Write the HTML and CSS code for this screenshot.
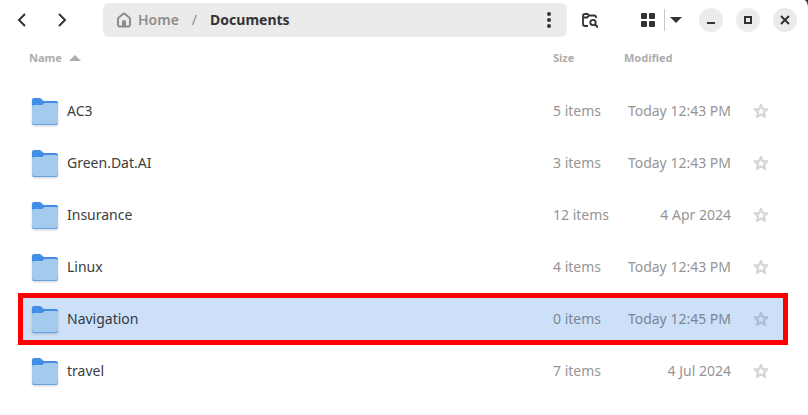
FILE: index.html
```html
<!DOCTYPE html>
<html lang="en">
<head>
<meta charset="utf-8">
<title>Documents</title>
<link rel="stylesheet" href="styles.css">
</head>
<body>
<svg class="defs" aria-hidden="true">
  <symbol id="folder" viewBox="0 0 30 34">
    <path d="M2 29V6Q2 4 4 4H9.500Q11 4 12 5.500T14.500 7H26Q28 7 28 9V29Z" fill="#438de6"/>
    <path d="M4 11H11.500Q12.800 11 13.500 10T15.500 9H26Q28 9 28 11V29Q28 31 26 31H4Q2 31 2 29V13Q2 11 4 11Z" fill="#62a0ea"/>
    <path d="M4 11H11.500Q12.800 11 13.500 10T15.500 9H26Q28 9 28 11V28Q28 30 26 30H4Q2 30 2 28V13Q2 11 4 11Z" fill="#a4caee"/>
  </symbol>
  <symbol id="star" viewBox="0 0 16 16">
    <path d="M8 1.800L9.700 6.100L14.300 6.400L10.800 9.300L12 13.900L8 11.400L4 13.900L5.200 9.300L1.700 6.400L6.300 6.100Z" fill="none" stroke="currentColor" stroke-width="2.200" stroke-linejoin="round"/>
  </symbol>
</svg>
<main class="window">
  <header class="bar">
    <nav class="history">
      <button class="tool" aria-label="Back"><svg width="16" height="16" viewBox="0 0 16 16"><path d="M11 2L5 8L11 14" class="line"/></svg></button>
      <button class="tool" aria-label="Forward"><svg width="16" height="16" viewBox="0 0 16 16"><path d="M5 2L11 8L5 14" class="line"/></svg></button>
    </nav>
    <div class="path">
      <a class="crumb" href="#"><svg width="16" height="16" viewBox="0 0 16 16"><path d="M2 7.200Q2 6.200 2.800 5.500L7 2Q8 1.200 9 2L13.200 5.500Q14 6.200 14 7.200V12.500Q14 14.500 12 14.500H4Q2 14.500 2 12.500Z" class="line"/><path d="M6 15V10Q6 8 8 8T10 10V15Z" fill="currentColor"/></svg>Home</a>
      <span class="slash">/</span>
      <a class="crumb current" href="#">Documents</a>
      <button class="tool more" aria-label="Folder menu"><svg width="16" height="16" viewBox="0 0 16 16" fill="currentColor"><circle cx="8" cy="2" r="2"/><circle cx="8" cy="8" r="2"/><circle cx="8" cy="14" r="2"/></svg></button>
    </div>
    <button class="tool" aria-label="Search"><svg width="16" height="16" viewBox="0 0 16 16"><path d="M6 14H3Q1 14 1 12V4Q1 2 3 2H5.500L7 3.500H12Q14 3.500 14 5.500V6M1 5.500H5L7 3.500" class="line thin"/><circle cx="11" cy="10.500" r="2.700" class="line thin"/><path d="M13 12.500L16 15.500" class="line"/></svg></button>
    <div class="view">
      <button class="tool" aria-label="Grid view"><svg width="16" height="16" viewBox="0 0 16 16" fill="currentColor"><rect x="1" y="1" width="6" height="6" rx="1"/><rect x="9" y="1" width="6" height="6" rx="1"/><rect x="1" y="9" width="6" height="6" rx="1"/><rect x="9" y="9" width="6" height="6" rx="1"/></svg></button>
      <button class="tool arrow" aria-label="View options"><svg width="12" height="6" viewBox="0 0 12 6"><path d="M0 0H12L6 6Z" fill="currentColor"/></svg></button>
    </div>
    <div class="controls">
      <button aria-label="Minimize"><svg width="16" height="16" viewBox="0 0 16 16"><path d="M4 11H12" class="line"/></svg></button>
      <button aria-label="Maximize"><svg width="16" height="16" viewBox="0 0 16 16"><path d="M5 5H11V11H5Z" class="line"/></svg></button>
      <button aria-label="Close"><svg width="16" height="16" viewBox="0 0 16 16"><path d="M4 4L12 12M12 4L4 12" class="line"/></svg></button>
    </div>
  </header>
  <table class="files">
    <thead>
      <tr><th class="name"><button class="sort">Name<svg width="12" height="6" viewBox="0 0 12 6"><path d="M0 6H12L6 0Z" fill="currentColor"/></svg></button></th><th class="size">Size</th><th class="modified">Modified</th><th class="fav"></th></tr>
    </thead>
    <tbody>
      <tr><td><div class="file"><svg width="30" height="34"><use href="#folder"/></svg>AC3</div></td><td>5 items</td><td class="date">Today 12:43 PM</td><td><button class="star" aria-label="Star AC3"><svg width="16" height="16"><use href="#star"/></svg></button></td></tr>
      <tr><td><div class="file"><svg width="30" height="34"><use href="#folder"/></svg>Green.Dat.AI</div></td><td>3 items</td><td class="date">Today 12:43 PM</td><td><button class="star" aria-label="Star Green.Dat.AI"><svg width="16" height="16"><use href="#star"/></svg></button></td></tr>
      <tr><td><div class="file"><svg width="30" height="34"><use href="#folder"/></svg>Insurance</div></td><td>12 items</td><td class="date">4 Apr 2024</td><td><button class="star" aria-label="Star Insurance"><svg width="16" height="16"><use href="#star"/></svg></button></td></tr>
      <tr><td><div class="file"><svg width="30" height="34"><use href="#folder"/></svg>Linux</div></td><td>4 items</td><td class="date">Today 12:43 PM</td><td><button class="star" aria-label="Star Linux"><svg width="16" height="16"><use href="#star"/></svg></button></td></tr>
      <tr class="selected"><td><div class="file"><svg width="30" height="34"><use href="#folder"/></svg>Navigation</div></td><td>0 items</td><td class="date">Today 12:45 PM</td><td><button class="star" aria-label="Star Navigation"><svg width="16" height="16"><use href="#star"/></svg></button></td></tr>
      <tr><td><div class="file"><svg width="30" height="34"><use href="#folder"/></svg>travel</div></td><td>7 items</td><td class="date">4 Jul 2024</td><td><button class="star" aria-label="Star travel"><svg width="16" height="16"><use href="#star"/></svg></button></td></tr>
    </tbody>
  </table>
</main>
</body>
</html>
```
FILE: styles.css
```css
* { box-sizing: border-box; }
body {
  margin: 0;
  background: #173a63;
  color: #3d3d3d;
  font: 14px/20px "Noto Sans", sans-serif;
}
button {
  padding: 0;
  border: 0;
  background: none;
  color: inherit;
  font: inherit;
}
svg { flex: none; }
.defs { position: absolute; width: 0; height: 0; }
.line { fill: none; stroke: currentColor; stroke-width: 2; }
.line.thin { stroke-width: 1.800; }
.window {
  min-height: 100vh;
  background: #ffffff;
  border-top-right-radius: 4px 8px;
}
.bar {
  display: flex;
  align-items: center;
  height: 40px;
  padding: 0 11px 0 5px;
  color: #333333;
}
.history { display: flex; gap: 6px; }
.tool {
  display: flex;
  align-items: center;
  justify-content: center;
  width: 34px;
  height: 34px;
}
.path {
  display: flex;
  flex: 1;
  align-items: center;
  height: 34px;
  margin: 0 6px 0 24px;
  padding: 0 1px 0 13px;
  border-radius: 6px;
  background: #ebebeb;
}
.crumb {
  display: flex;
  align-items: center;
  gap: 6px;
  color: #8d8d8d;
  font-weight: 600;
  text-decoration: none;
}
.crumb.current { color: #333333; font-weight: 700; }
.slash { margin: 0 13px; color: #8d8d8d; }
.more { margin-left: auto; }
.view { display: flex; margin-left: 24px; }
.view .arrow {
  width: 22px;
  height: 22px;
  margin: 6px 0 6px -1px;
  border-left: 1px solid #c6c6c6;
}
.controls { display: flex; gap: 13px; margin-left: 13px; }
.controls button {
  display: flex;
  align-items: center;
  justify-content: center;
  width: 24px;
  height: 24px;
  border-radius: 50%;
  background: #ebebeb;
}
.files {
  width: calc(100% - 38px);
  margin: 0 20px 0 18px;
  border-collapse: collapse;
  table-layout: fixed;
}
th {
  height: 45px;
  padding: 8px 0 17px;
  color: #adadad;
  font-size: 11px;
  font-weight: 700;
  text-align: left;
}
th.name { padding-left: 11px; }
.size { width: 71px; }
.modified { width: 107px; }
.fav { width: 57px; }
.sort { display: flex; align-items: center; gap: 7px; }
td { height: 52px; padding: 0; color: #959595; white-space: nowrap; }
.file {
  display: flex;
  align-items: center;
  gap: 7px;
  padding-left: 12px;
  color: #3d3d3d;
}
.file svg { filter: drop-shadow(0 1px 1px #00000030); }
.date { text-align: right; }
.star { display: flex; margin-left: 22px; color: #d6d6d6; }
.selected { background: #cce0f8; outline: 5px solid #ff0000; outline-offset: -5px; }
.selected td { color: #7a8695; }
.selected .file { color: #333a42; }
.selected .star { color: #adbfd4; }
```
